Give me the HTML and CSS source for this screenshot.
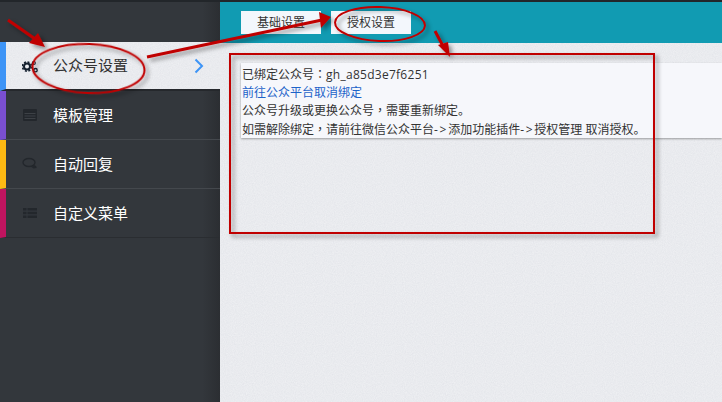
FILE: index.html
```html
<!DOCTYPE html>
<html lang="zh-CN">
<head>
    <meta charset="UTF-8">
    <meta name="viewport" content="width=device-width, initial-scale=1.0">
    <title>授权设置</title>
    <link rel="stylesheet" href="styles.css">
</head>
<body>
<div class="layout">
    <aside class="sidebar">
        <ul class="menu">
            <li class="menu-item active">
                <svg class="menu-icon" viewBox="0 0 16 16">
                    <g fill="none" stroke="#14202e">
                        <circle cx="5" cy="8.500" r="3" stroke-width="2"/>
                        <circle cx="5" cy="8.500" r="4.600" stroke-width="1.600" stroke-dasharray="2 1.610"/>
                        <circle cx="13.500" cy="12.200" r="1.700" stroke-width="1.300"/>
                        <circle cx="11.800" cy="5" r="1.500" stroke-width="1.200"/>
                    </g>
                </svg>
                <span class="menu-label">公众号设置</span>
                <svg class="menu-arrow" viewBox="0 0 10 16"><path d="M1.500 1.500 8 8l-6.500 6.500" fill="none" stroke="#3d94f6" stroke-width="2"/></svg>
            </li>
            <li class="menu-item purple">
                <svg class="menu-icon" viewBox="0 0 16 16"><rect x="1" y="2" width="14" height="12" rx="1" fill="#23272c"/><path d="M2.500 6.500h11M2.500 9h11M2.500 11.500h11" stroke="#3d4146" stroke-width="1"/></svg>
                <span class="menu-label">模板管理</span>
            </li>
            <li class="menu-item yellow">
                <svg class="menu-icon" viewBox="0 0 16 16"><ellipse cx="7" cy="6.500" rx="6" ry="4" fill="none" stroke="#23272c" stroke-width="1.400"/><path d="M12 9c2 .5 3 1.500 2.500 3l-3 .5-2-1.500z" fill="#23272c"/></svg>
                <span class="menu-label">自动回复</span>
            </li>
            <li class="menu-item crimson">
                <svg class="menu-icon" viewBox="0 0 16 16"><path d="M1 3h3.500v2.500H1zM5.500 3H15v2.500H5.500zM1 6.800h3.500v2.500H1zM5.500 6.800H15v2.500H5.500zM1 10.600h3.500v2.500H1zM5.500 10.600H15v2.500H5.500z" fill="#23272c"/></svg>
                <span class="menu-label">自定义菜单</span>
            </li>
        </ul>
    </aside>
    <main class="content">
        <nav class="tabs">
            <a class="tab">基础设置</a>
            <a class="tab">授权设置</a>
        </nav>
        <section class="panel">
            <p>已绑定公众号<span class="mark" lang="zh-TW">：</span><span class="account-id">gh_a85d3e7f6251</span></p>
            <p><a class="link">前往公众平台取消绑定</a></p>
            <p>公众号升级或更换公众号<span class="mark" lang="zh-TW">，</span>需要重新绑定。</p>
            <p>如需解除绑定<span class="mark" lang="zh-TW">，</span>请前往微信公众平台<span class="step">-&gt;</span>添加功能插件<span class="step">-&gt;</span>授权管理 取消授权。</p>
        </section>
    </main>
</div>

<!-- red hand-drawn notes on top of the screenshot -->
<svg class="notes" viewBox="0 0 722 402">
    <defs>
        <filter id="shade" x="-20%" y="-20%" width="140%" height="140%">
            <feDropShadow dx="3" dy="3" stdDeviation="2" flood-color="#000" flood-opacity="0.4"/>
        </filter>
    </defs>
    <g filter="url(#shade)" fill="#c00000">
        <path d="M8 20 38 41" stroke="#c00000" stroke-width="3"/>
        <path d="M45 47 29 43 38 33z"/>
        <path d="M147 57 322 20" stroke="#c00000" stroke-width="3"/>
        <path d="M331 17 321 28 319 12z"/>
        <path d="M435 31 444 48" stroke="#c00000" stroke-width="3"/>
        <path d="M450 57 438 45 448 42z"/>
        <ellipse cx="88.500" cy="68.500" rx="56" ry="24.500" fill="none" stroke="#c00000" stroke-width="2" transform="rotate(2 88.500 68.500)"/>
        <ellipse cx="380" cy="24" rx="45" ry="17" fill="none" stroke="#c00000" stroke-width="2" transform="rotate(2 380 24)"/>
        <rect x="230" y="54" width="424" height="179" fill="none" stroke="#c00000" stroke-width="2"/>
    </g>
</svg>
</body>
</html>
```

FILE: styles.css
```css
:root {
    /* fine paper grain */
    --grain: url("data:image/svg+xml,%3Csvg xmlns='http://www.w3.org/2000/svg' width='200' height='200'%3E%3Cfilter id='g'%3E%3CfeTurbulence type='fractalNoise' baseFrequency='0.9' numOctaves='2'/%3E%3CfeColorMatrix values='0 0 0 0 1 0 0 0 0 1 0 0 0 0 1 0 0 0 0.5 0'/%3E%3C/filter%3E%3Crect width='200' height='200' filter='url(%23g)'/%3E%3C/svg%3E");
}

body {
    margin: 0;
    height: 402px;
    overflow: hidden;
    position: relative;
    background-color: #e2e4e9;
    background-image: var(--grain);
    font-family: "Open Sans", "Noto Sans CJK SC", sans-serif;
    font-size: 12px;
    color: #333;
}

.layout {
    display: flex;
    height: 100%;
    border-top: 2px solid #22262a;
    box-sizing: border-box;
}

.sidebar {
    width: 220px;
    flex-shrink: 0;
    padding-top: 40px;
    background: linear-gradient(to right, #33373c 92%, #2b2e32);
}

.menu {
    list-style: none;
    margin: 0;
    padding: 0;
}

.menu-item {
    display: flex;
    align-items: center;
    height: 48px;
    padding-left: 16px;
    border-left: 6px solid transparent;
    border-bottom: 1px solid #44484d;
    color: #fff;
    font-size: 15px;
}

.menu-item.active {
    height: 47px;
    border-left-color: #3d94f6;
    border-bottom: 2px solid #25282c;
    background-color: #e2e4e9;
    background-image: var(--grain);
    color: #333;
}

.menu-item.purple {
    border-left-color: #7a4fd0;
}

.menu-item.yellow {
    border-left-color: #fdb913;
}

.menu-item.crimson {
    border-left-color: #c0145f;
    border-bottom-color: #2a2d31;
}

.menu-icon {
    width: 16px;
    height: 16px;
    margin-right: 15px;
}

.menu-label {
    flex: 1;
    padding-bottom: 2px;
}

.menu-arrow {
    width: 10px;
    height: 16px;
    margin-right: 16px;
}

.content {
    flex: 1;
    min-width: 0;
}

.tabs {
    display: flex;
    gap: 10px;
    height: 41px;
    box-sizing: border-box;
    padding: 9px 0 0 21px;
    background: #119bb2;
}

.tab {
    width: 80px;
    height: 23px;
    line-height: 23px;
    text-align: center;
    background: #f3f7fc;
    color: #333;
}

.panel {
    margin: 20px 0 0 21px;
    padding: 3px 0 0 1px;
    height: 75px;
    box-sizing: border-box;
    background: #f6f7fb;
    box-shadow: 0 1px 2px rgba(0, 0, 0, 0.35);
}

.panel p {
    margin: 0;
    height: 18.2px;
    line-height: 18.2px;
    white-space: nowrap;
}

/* full-width marks sit centred in the cell, as in the traditional font */
.mark {
    font-family: "Noto Sans CJK TC", sans-serif;
    line-height: 0;
}

.account-id {
    letter-spacing: 0.27px;
}

.step {
    letter-spacing: 1.7px;
}

.link {
    color: #1d63c9;
}

.notes {
    position: absolute;
    top: 0;
    left: 0;
    width: 722px;
    height: 402px;
    pointer-events: none;
}
```
